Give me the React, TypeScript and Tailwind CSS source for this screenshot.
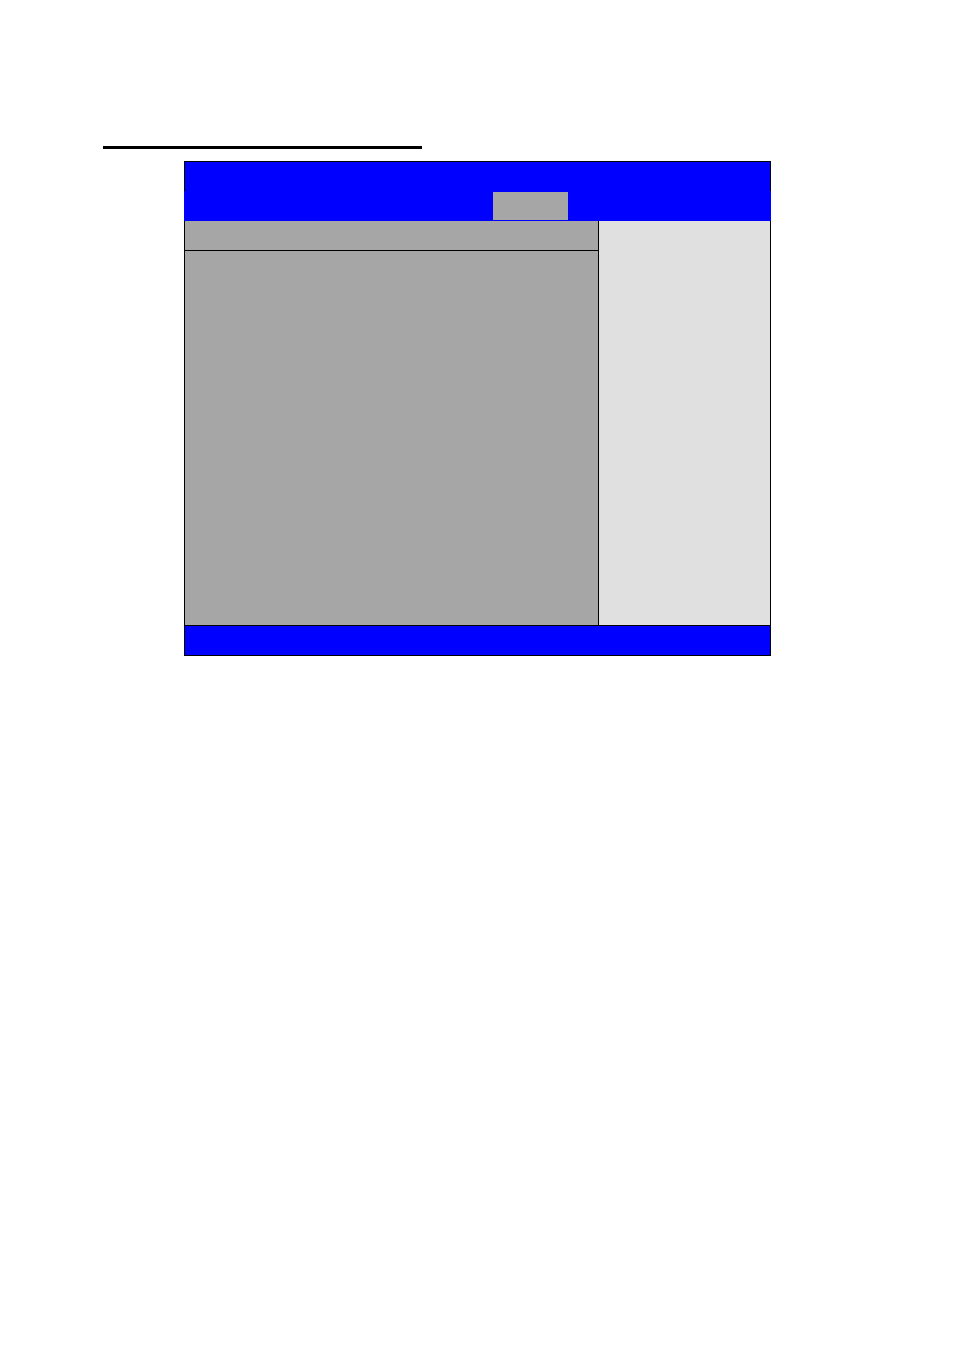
import React from 'react';

// Setup screen frame: blue title bar with tab strip, grey item pane, help pane, blue footer
export default function App() {
  return (
    <div className="min-h-[1350px] w-[955px] bg-white pt-[146px]">
      <div className="ml-[103px] h-[3px] w-[319px] bg-black" />
      <div className="ml-[184px] mt-[12px] w-[587px]">
        {/* title bar */}
        <div className="h-[30px] border-x border-t border-black bg-[#0000ff]" />
        {/* tab strip */}
        <div className="flex h-[30px] bg-[#0000ff] pl-[309px] pt-px">
          <div className="h-[28px] w-[75px] bg-[#a6a6a6]" />
        </div>
        {/* body */}
        <div className="flex h-[404px] border-x border-black">
          <div className="flex w-[414px] flex-col border-r border-black bg-[#a6a6a6]">
            <div className="h-[30px] border-b border-black" />
            <div className="flex-1" />
          </div>
          <div className="flex-1 bg-[#e0e0e0]" />
        </div>
        {/* footer */}
        <div className="h-[31px] border border-black bg-[#0000ff]" />
      </div>
    </div>
  );
}
